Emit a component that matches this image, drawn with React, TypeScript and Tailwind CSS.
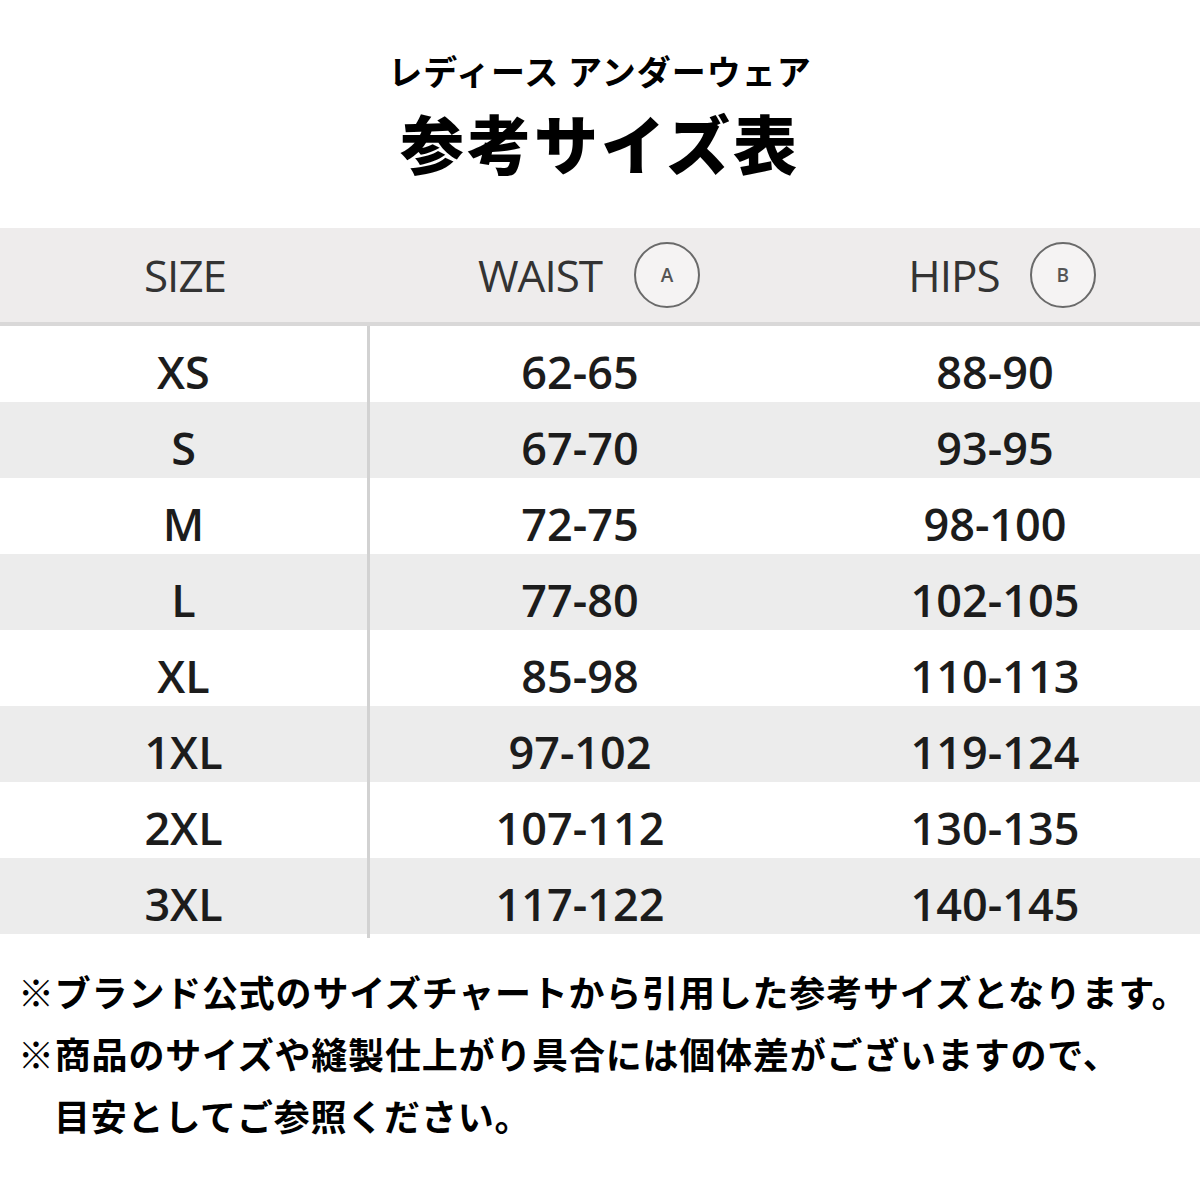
import React from "react";

const rows = [
  { size: "XS", waist: "62-65", hips: "88-90" },
  { size: "S", waist: "67-70", hips: "93-95" },
  { size: "M", waist: "72-75", hips: "98-100" },
  { size: "L", waist: "77-80", hips: "102-105" },
  { size: "XL", waist: "85-98", hips: "110-113" },
  { size: "1XL", waist: "97-102", hips: "119-124" },
  { size: "2XL", waist: "107-112", hips: "130-135" },
  { size: "3XL", waist: "117-122", hips: "140-145" },
];

const jp = { fontFamily: '"Noto Sans CJK JP", "Noto Sans", sans-serif' };
const latin = { fontFamily: '"Open Sans", "Liberation Sans", sans-serif' };

const Badge = ({ letter }: { letter: string }) => (
  <span className="w-[66px] h-[66px] rounded-full border-2 border-[#6a6a6a] bg-white/40 flex items-center justify-center text-[19px] font-semibold text-[#555] tracking-normal">
    {letter}
  </span>
);

export default function App() {
  return (
    <div className="w-[1200px] h-[1200px] bg-white flex flex-col">
      {/* title */}
      <div className="flex flex-col items-center pt-[46px]" style={jp}>
        <div className="text-[34px] leading-[49px] font-bold text-black tracking-[1px]">
          レディース アンダーウェア
        </div>
        <div className="text-[64px] leading-[93px] font-black text-black tracking-[3px]">
          参考サイズ表
        </div>
      </div>

      {/* table */}
      <div className="mt-[40px]" style={latin}>
        <div className="grid grid-cols-[370px_420px_1fr] h-[98px] bg-[#eeecec] border-b-4 border-[#d9d8d8] text-[#333] text-[44px] tracking-[-1px] font-normal">
          <div className="flex items-center justify-center">SIZE</div>
          <div className="flex items-center justify-center gap-[32px] pl-[18px]">
            <span>WAIST</span>
            <Badge letter="A" />
          </div>
          <div className="flex items-center justify-center gap-[30px] pl-[14px]">
            <span>HIPS</span>
            <Badge letter="B" />
          </div>
        </div>
        {rows.map((r, i) => (
          <div
            key={r.size}
            className={`grid grid-cols-[370px_420px_1fr] h-[76px] text-[45px] font-semibold text-[#1c1c1c] ${i % 2 === 1 ? "bg-[#ececec]" : "bg-white"}`}
          >
            <div className="flex items-center justify-center pt-[12px] border-r-[3px] border-[#d2d2d2]">
              {r.size}
            </div>
            <div className="flex items-center justify-center pt-[12px]">{r.waist}</div>
            <div className="flex items-center justify-center pt-[12px]">{r.hips}</div>
          </div>
        ))}
      </div>

      {/* notes */}
      <div className="pl-[18px] pt-[26px] text-[36px] leading-[62px] font-bold text-black tracking-[0.8px]" style={jp}>
        <div>※ブランド公式のサイズチャートから引用した参考サイズとなります。</div>
        <div>※商品のサイズや縫製仕上がり具合には個体差がございますので、</div>
        <div className="pl-[36px]">目安としてご参照ください。</div>
      </div>
    </div>
  );
}
